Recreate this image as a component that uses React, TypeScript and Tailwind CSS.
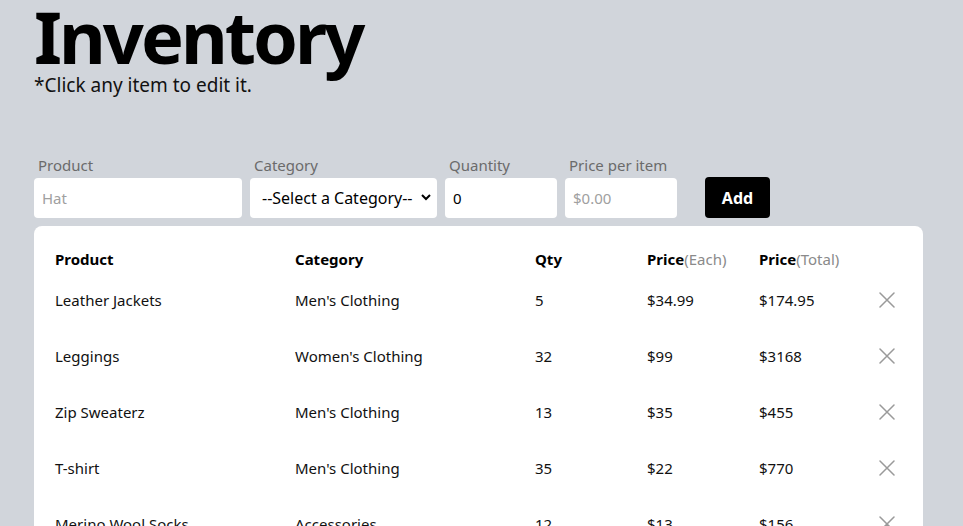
import React from "react";

const rows = [
  { p: "Leather Jackets", c: "Men's Clothing", q: "5", e: "$34.99", t: "$174.95" },
  { p: "Leggings", c: "Women's Clothing", q: "32", e: "$99", t: "$3168" },
  { p: "Zip Sweaterz", c: "Men's Clothing", q: "13", e: "$35", t: "$455" },
  { p: "T-shirt", c: "Men's Clothing", q: "35", e: "$22", t: "$770" },
  { p: "Merino Wool Socks", c: "Accessories", q: "12", e: "$13", t: "$156" },
  { p: "Beanie", c: "Accessories", q: "20", e: "$15", t: "$300" },
];

function XIcon() {
  return (
    <svg width="16" height="16" viewBox="0 0 16 16" fill="none" stroke="#9a9a9a" strokeWidth="1.5" strokeLinecap="round">
      <path d="M1 1L15 15M15 1L1 15" />
    </svg>
  );
}

export default function App() {
  return (
    <div
      className="h-[526px] overflow-hidden bg-[#d1d5db] px-[34px] text-black"
      style={{ fontFamily: '"Segoe UI", "Noto Sans", "Open Sans", sans-serif' }}
    >
      <h1 className="text-[72px] font-bold leading-[72px] tracking-[-3px]">Inventory</h1>
      <p className="text-[19px] leading-[26px] text-[#111]">*Click any item to edit it.</p>

      <div className="mt-[57px] flex items-end">
        <div className="flex flex-col">
          <label className="pl-[4px] text-[15px] leading-[20px] text-[#6b6b6b]">Product</label>
          <input
            className="mt-[3px] h-[40px] w-[208px] rounded-[4px] bg-white px-[8px] text-[15px] outline-none placeholder:text-[#a0a0a0]"
            placeholder="Hat"
          />
        </div>
        <div className="ml-[8px] flex flex-col">
          <label className="pl-[4px] text-[15px] leading-[20px] text-[#6b6b6b]">Category</label>
          <div className="relative mt-[3px] flex h-[40px] w-[187px] items-center rounded-[4px] bg-white pl-[12px] text-[16px]">
            <span>--Select a Category--</span>
            <svg className="absolute right-[6px] top-[16px]" width="10" height="7" viewBox="0 0 10 7" fill="none" stroke="#000" strokeWidth="2">
              <path d="M1 1L5 5L9 1" />
            </svg>
          </div>
        </div>
        <div className="ml-[8px] flex flex-col">
          <label className="pl-[4px] text-[15px] leading-[20px] text-[#6b6b6b]">Quantity</label>
          <div className="mt-[3px] flex h-[40px] w-[112px] items-center rounded-[4px] bg-white px-[8px] text-[15px]">0</div>
        </div>
        <div className="ml-[8px] flex flex-col">
          <label className="pl-[4px] text-[15px] leading-[20px] text-[#6b6b6b]">Price per item</label>
          <input
            className="mt-[3px] h-[40px] w-[112px] rounded-[4px] bg-white px-[8px] text-[15px] outline-none placeholder:text-[#a0a0a0]"
            placeholder="$0.00"
          />
        </div>
        <button className="ml-[28px] h-[41px] w-[65px] rounded-[4px] bg-black text-[16px] font-bold text-white">
          Add
        </button>
      </div>

      <div className="mt-[8px] h-[400px] w-[889px] rounded-t-[8px] bg-white pl-[21px] pt-[20px]">
        <div className="grid h-[26px] grid-cols-[240px_240px_112px_112px_112px_1fr] items-center text-[15px] font-bold">
          <div>Product</div>
          <div>Category</div>
          <div>Qty</div>
          <div>
            Price<span className="font-normal text-[#8a8a8a]">(Each)</span>
          </div>
          <div>
            Price<span className="font-normal text-[#8a8a8a]">(Total)</span>
          </div>
          <div />
        </div>
        {rows.map((r) => (
          <div
            key={r.p}
            className="grid h-[56px] grid-cols-[240px_240px_112px_112px_112px_1fr] items-center text-[15px] text-[#111]"
          >
            <div>{r.p}</div>
            <div>{r.c}</div>
            <div>{r.q}</div>
            <div>{r.e}</div>
            <div>{r.t}</div>
            <div className="pl-[8px]">
              <XIcon />
            </div>
          </div>
        ))}
      </div>
    </div>
  );
}
